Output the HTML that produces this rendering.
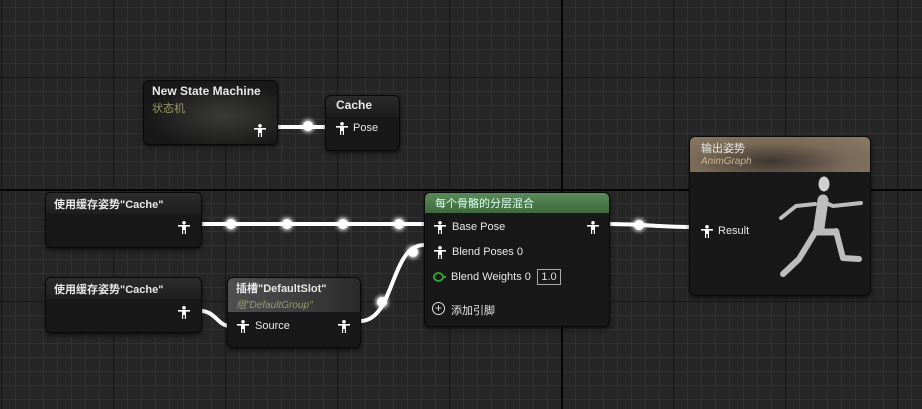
<!DOCTYPE html>
<html><head><meta charset="utf-8"><style>
*{margin:0;padding:0;box-sizing:border-box}
body{width:922px;height:409px;overflow:hidden;position:relative;font-family:"Liberation Sans","Noto Sans CJK SC",sans-serif;
background-color:#262626;
background-image:
linear-gradient(90deg,#171717 1px,transparent 1px),
linear-gradient(0deg,#171717 1px,transparent 1px),
linear-gradient(90deg,#323232 1px,transparent 1px),
linear-gradient(0deg,#323232 1px,transparent 1px);
background-size:112px 112px,112px 112px,14px 14px,14px 14px;
background-position:1px 0,0 78px,1px 0,0 8px;}
.ax{position:absolute;background:#050505}
.n{position:absolute;background:#181818;border:1px solid #0a0a0a;border-radius:6px;box-shadow:0 2px 4px rgba(0,0,0,.6);overflow:hidden;color:#e6e6e6;font-size:11px}
.t{font-weight:bold;font-size:12px;color:#e8e8e8;position:absolute;left:8px}
.s{font-size:11px;position:absolute;left:8px}
.p{position:absolute;width:12px;height:13px}
.lbl{position:absolute;font-size:11px;color:#e8e8e8}
svg{position:absolute;left:0;top:0}
</style></head><body>
<div class="ax" style="left:561px;top:0;width:2px;height:409px"></div>
<div class="ax" style="left:0;top:189px;width:922px;height:2px"></div>
<svg width="922" height="409" style="z-index:1">
<defs><filter id="g" x="-50%" y="-50%" width="200%" height="200%"><feGaussianBlur stdDeviation="2"/></filter>
<symbol id="pin" viewBox="0 0 12 13"><circle cx="6" cy="1.8" r="1.8" fill="#fff"/><path d="M0 4h12v1.6H8v7.4H6.8V9H5.2v4H4V5.6H0z" fill="#fff"/></symbol></defs>
<g stroke="#fff" stroke-width="4" fill="none">
<path d="M277 127 H325"/>
<path d="M201 224 H424"/>
<path d="M609 224 C640 224 660 227 689 227"/>
<path d="M201 311 C215 311 218 326 230 326"/>
<path d="M360 321 C395 321 390 245 424 245"/>
</g>
<g fill="#fff">
<circle cx="308" cy="126" r="6" filter="url(#g)"/><circle cx="308" cy="126" r="5"/>
<circle cx="231" cy="224" r="6" filter="url(#g)"/><circle cx="231" cy="224" r="5"/>
<circle cx="287" cy="224" r="6" filter="url(#g)"/><circle cx="287" cy="224" r="5"/>
<circle cx="343" cy="224" r="6" filter="url(#g)"/><circle cx="343" cy="224" r="5"/>
<circle cx="399" cy="224" r="6" filter="url(#g)"/><circle cx="399" cy="224" r="5"/>
<circle cx="639" cy="225" r="6" filter="url(#g)"/><circle cx="639" cy="225" r="5"/>
<circle cx="382" cy="302" r="6" filter="url(#g)"/><circle cx="382" cy="302" r="5"/>
<circle cx="413" cy="252" r="6" filter="url(#g)"/><circle cx="413" cy="252" r="5"/>
</g>
</svg>

<div class="n" style="left:143px;top:80px;width:135px;height:65px;z-index:2;background:radial-gradient(ellipse at 60% 55%,#3a3a38,#181818 70%)">
<div class="t" style="top:3px">New State Machine</div>
<div class="s" style="top:19px;color:#9a9a6a">状态机</div>
<svg class="p" style="left:110px;top:43px;width:12px;height:13px"><use href="#pin" width="12" height="13"/></svg>
</div>

<div class="n" style="left:325px;top:95px;width:75px;height:56px;z-index:2">
<div style="position:absolute;left:0;top:0;right:0;height:21px;background:linear-gradient(#2a2a2a,#1c1c1c)"></div>
<div class="t" style="top:2px;left:10px">Cache</div>
<svg class="p" style="left:10px;top:26px"><use href="#pin" width="12" height="13"/></svg>
<div class="lbl" style="left:27px;top:26px">Pose</div>
</div>

<div class="n" style="left:45px;top:192px;width:157px;height:56px;z-index:2">
<div style="position:absolute;left:0;top:0;right:0;height:21px;background:linear-gradient(#2c2c2c,#1e1e1e)"></div>
<div class="t" style="top:3px;font-size:11px">使用缓存姿势"Cache"</div>
<svg class="p" style="left:132px;top:28px"><use href="#pin" width="12" height="13"/></svg>
</div>

<div class="n" style="left:45px;top:277px;width:157px;height:56px;z-index:2">
<div style="position:absolute;left:0;top:0;right:0;height:21px;background:linear-gradient(#2c2c2c,#1e1e1e)"></div>
<div class="t" style="top:3px;font-size:11px">使用缓存姿势"Cache"</div>
<svg class="p" style="left:132px;top:28px"><use href="#pin" width="12" height="13"/></svg>
</div>

<div class="n" style="left:227px;top:277px;width:134px;height:71px;z-index:2">
<div style="position:absolute;left:0;top:0;right:0;height:34px;background:linear-gradient(90deg,#505050,#3c3c3c 60%,#2a2a2a)"></div>
<div class="t" style="top:2px;font-size:11px">插槽"DefaultSlot"</div>
<div class="s" style="top:18px;color:#9a9a6a;font-style:italic;font-size:10px">组"DefaultGroup"</div>
<svg class="p" style="left:9px;top:42px"><use href="#pin" width="12" height="13"/></svg>
<div class="lbl" style="left:27px;top:42px">Source</div>
<svg class="p" style="left:110px;top:42px"><use href="#pin" width="12" height="13"/></svg>
</div>

<div class="n" style="left:424px;top:192px;width:186px;height:135px;z-index:2">
<div style="position:absolute;left:0;top:0;right:0;height:20px;background:linear-gradient(#5a8a5a,#3e6a3e)"></div>
<div style="position:absolute;left:10px;top:2px;font-size:11px;color:#dfe">每个骨骼的分层混合</div>
<svg class="p" style="left:9px;top:28px"><use href="#pin" width="12" height="13"/></svg>
<div class="lbl" style="left:27px;top:28px">Base Pose</div>
<svg class="p" style="left:162px;top:28px"><use href="#pin" width="12" height="13"/></svg>
<svg class="p" style="left:9px;top:53px"><use href="#pin" width="12" height="13"/></svg>
<div class="lbl" style="left:27px;top:53px">Blend Poses 0</div>
<div style="position:absolute;left:8px;top:79px;width:11px;height:10px;border:2px solid #2fa02f;border-radius:50%"></div>
<div style="position:absolute;left:18px;top:83px;width:3px;height:2px;background:#2fa02f"></div>
<div class="lbl" style="left:26px;top:78px">Blend Weights 0</div>
<div style="position:absolute;left:112px;top:76px;width:24px;height:16px;border:1px solid #aaa;font-size:11px;color:#ddd;text-align:center;line-height:14px">1.0</div>
<div style="position:absolute;left:7px;top:109px;width:13px;height:13px;border:1.5px solid #ddd;border-radius:50%;font-size:12px;line-height:10px;text-align:center;color:#ddd">+</div>
<div class="lbl" style="left:26px;top:109px">添加引脚</div>
</div>

<div class="n" style="left:689px;top:136px;width:182px;height:160px;z-index:2">
<div style="position:absolute;left:0;top:0;right:0;height:35px;background:radial-gradient(ellipse at 45% 70%,#3e3630,#7a6a58 55%,#8a7a68)"></div>
<div style="position:absolute;left:11px;top:3px;font-size:11px;color:#e8e8e8">输出姿势</div>
<div style="position:absolute;left:11px;top:19px;font-size:10px;font-style:italic;color:#c8b898">AnimGraph</div>
<svg class="p" style="left:11px;top:88px"><use href="#pin" width="12" height="13"/></svg>
<div class="lbl" style="left:28px;top:88px">Result</div>
<svg width="100" height="120" style="left:80px;top:35px">
<g stroke="#bdbdbd" stroke-linecap="round" stroke-linejoin="round" fill="none">
<path d="M66 59 L73 86 L89 87" stroke-width="6"/>
<path d="M56 31 L63 34 L91 31" stroke-width="4"/>
<path d="M53 28 L49 56" stroke-width="11"/>
<path d="M46 59 L29 87 L13 102" stroke-width="6"/>
<path d="M45 32 L26 34 L11 46" stroke-width="4"/>
<path d="M46 60 L66 60" stroke-width="7"/>
</g>
<ellipse cx="54" cy="12" rx="5.5" ry="7.5" fill="#cfcfcf"/>
</svg>
</div>
</body></html>
